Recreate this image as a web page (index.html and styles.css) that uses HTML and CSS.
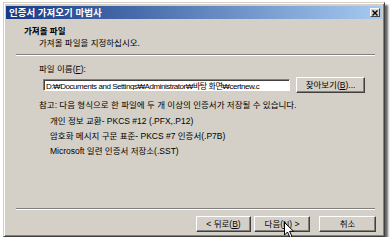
FILE: index.html
```html
<!DOCTYPE html>
<html lang="ko">
<head>
<meta charset="utf-8">
<link rel="stylesheet" href="styles.css">
</head>
<body>
<div class="window">
  <div class="titlebar">
    <span class="title">인증서 가져오기 마법사</span>
    <span class="close">
      <svg width="6" height="6" viewBox="0 0 6 6"><path d="M0.5 0.5L5.5 5.5M5.5 0.5L0.5 5.5" stroke="#000" stroke-width="1.4"/></svg>
    </span>
  </div>
  <div class="header">
    <div class="h-title">가져올 파일</div>
    <div class="h-sub">가져올 파일을 지정하십시오.</div>
  </div>
  <div class="sep"></div>
  <div class="content">
    <div class="label">파일 이름(<u>F</u>):</div>
    <div class="row">
      <input class="field" type="text" readonly value="D:₩Documents and Settings₩Administrator₩바탕 화면₩certnew.c">
      <button class="btn browse" type="button">찾아보기(<u>B</u>)...</button>
    </div>
    <div class="note">참고: 다음 형식으로 한 파일에 두 개 이상의 인증서가 저장될 수 있습니다.</div>
    <ul class="list">
      <li>개인 정보 교환- PKCS #12 (.PFX,.P12)</li>
      <li>암호화 메시지 구문 표준- PKCS #7 인증서(.P7B)</li>
      <li>Microsoft 일련 인증서 저장소(.SST)</li>
    </ul>
  </div>
  <div class="sep bottom"></div>
  <div class="buttons">
    <button class="btn back" type="button">&lt; 뒤로(<u>B</u>)</button>
    <button class="btn next" type="button">다음(<u>N</u>) &gt;</button>
    <button class="btn cancel" type="button">취소</button>
  </div>
  <svg class="cursor" width="11" height="17" viewBox="0 0 11 17"><path d="M0.5 0.5 L0.5 13 L3.5 10 L6 15.5 L8 14.6 L5.6 9.3 L9.6 9.3 Z" fill="#fff" stroke="#000" stroke-width="1" stroke-linejoin="miter"/></svg>
</div>
</body>
</html>
```
FILE: styles.css
```css
html, body {
  margin: 0;
  padding: 0;
  background: #ffffff;
}
body {
  font-family: "Liberation Sans", "Noto Sans CJK KR", sans-serif;
  font-size: 8.5px;
  color: #000;
}
.window {
  position: relative;
  box-sizing: border-box;
  margin: 2px 0 0 3px;
  width: 382px;
  height: 235px;
  background: #d4d0c8;
  border: 1px solid;
  border-color: #d4d0c8 #404040 #404040 #d4d0c8;
  box-shadow: inset 1px 1px #ffffff, inset -1px -1px #808080, 3px 3px 2px rgba(0,0,0,0.6);
  padding: 3px 2px 2px 2px;
  display: flex;
  flex-direction: column;
}
.titlebar {
  height: 13px;
  background: linear-gradient(to right, #163a86, #a6caf0);
  display: flex;
  align-items: center;
  justify-content: space-between;
  padding: 0 2px 0 3px;
}
.title {
  color: #fff;
  font-weight: bold;
  font-size: 9.5px;
  line-height: 13px;
}
.close {
  box-sizing: border-box;
  width: 10px;
  height: 9px;
  background: #d4d0c8;
  border: 1px solid;
  border-color: #fff #404040 #404040 #fff;
  display: flex;
  align-items: center;
  justify-content: center;
}
.close svg { display: block; }
.header {
  padding: 7px 0 0 18px;
}
.h-title {
  font-weight: bold;
  line-height: 11px;
}
.h-sub {
  line-height: 11px;
  margin-top: 1px;
  padding-left: 15px;
}
.sep {
  height: 0;
  border-top: 1px solid #808080;
  border-bottom: 1px solid #ffffff;
  margin: 5px 7px 0 10px;
}
.content {
  flex: 1;
  padding-left: 33px;
}
.label {
  margin-top: 8px;
  line-height: 11px;
}
.row {
  display: flex;
  align-items: center;
  margin-top: 2px;
  gap: 6px;
  padding-left: 4px;
}
.field {
  box-sizing: border-box;
  width: 247px;
  height: 12px;
  margin: 0;
  padding: 0 2px;
  font: inherit;
  font-size: 8px;
  letter-spacing: -0.45px;
  color: #000;
  background: #fff;
  border: 1px solid;
  border-color: #808080 #fff #fff #808080;
  box-shadow: inset 1px 1px #404040;
  outline: none;
}
.btn {
  box-sizing: border-box;
  height: 16px;
  margin: 0;
  padding: 0;
  font: inherit;
  font-size: 8.5px;
  color: #000;
  background: #d4d0c8;
  border: 1px solid;
  border-color: #fff #404040 #404040 #fff;
  box-shadow: inset -1px -1px #808080;
  line-height: 13px;
}
.browse { width: 69px; }
.note {
  margin-top: 7px;
  line-height: 11px;
}
.list {
  list-style: none;
  margin: 3px 0 0 0;
  padding: 0 0 0 11px;
}
.list li {
  line-height: 15px;
}
.sep.bottom {
  margin-top: 0;
}
.buttons {
  display: flex;
  justify-content: flex-end;
  padding: 6px 6px 2px 0;
}
.back { width: 55px; }
.next { width: 56px; margin-left: 3px; }
.cancel { width: 57px; margin-left: 9px; }
.cursor {
  position: absolute;
  left: 280px;
  top: 219px;
}
```
